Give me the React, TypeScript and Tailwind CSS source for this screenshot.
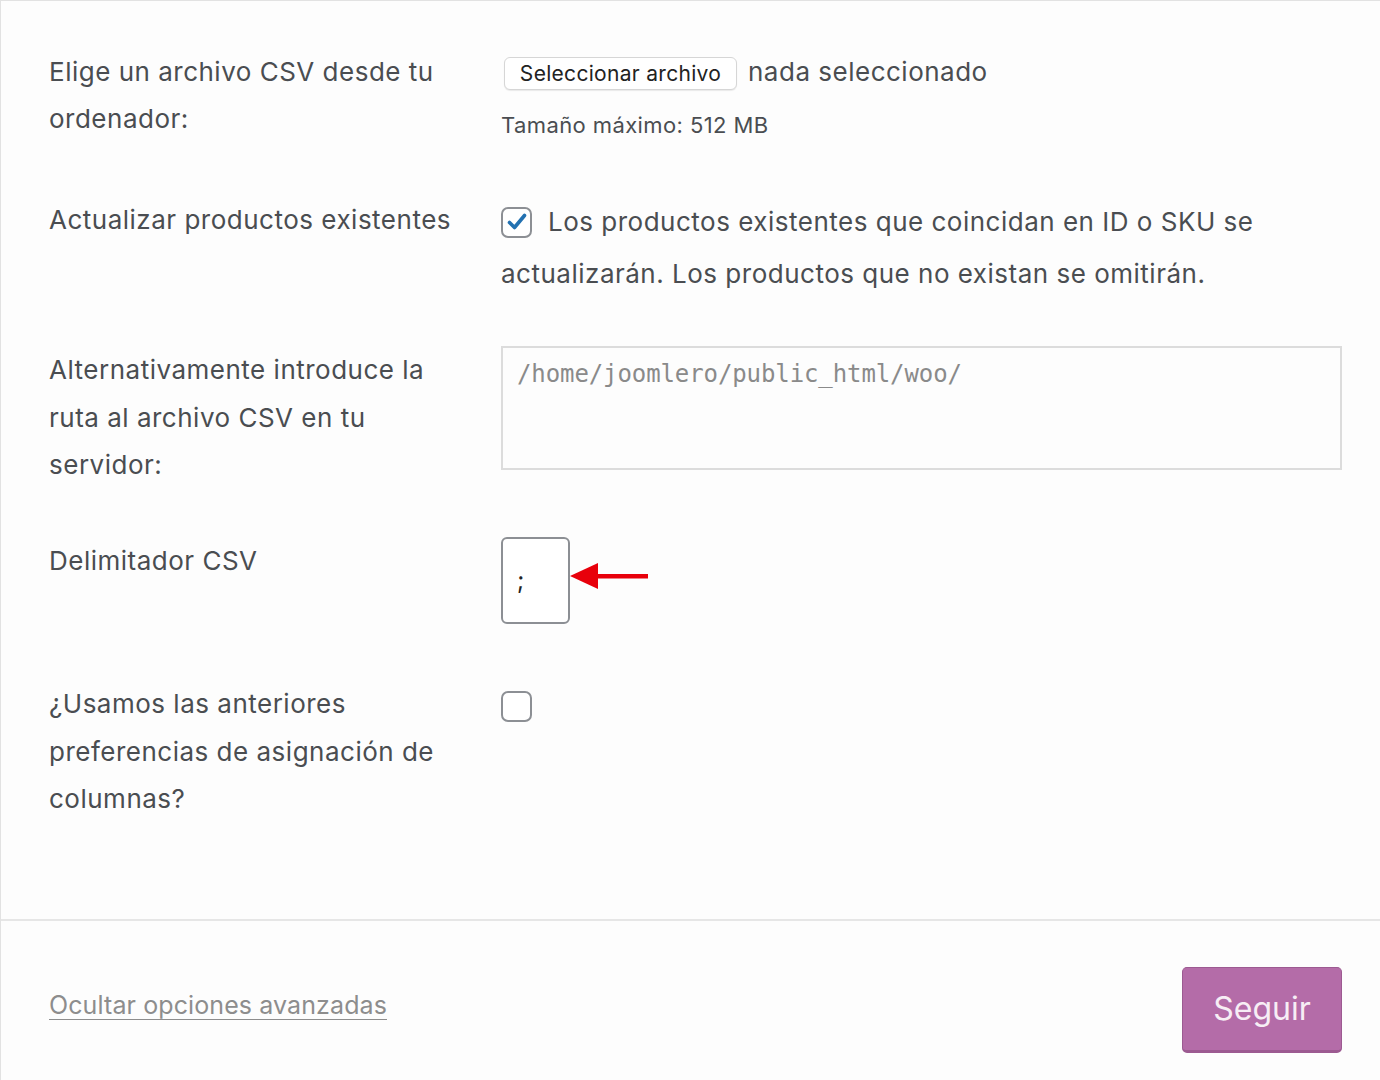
import React from "react";

function CheckBox({ checked }: { checked?: boolean }) {
  return (
    <span className="inline-flex h-[31px] w-[31px] shrink-0 items-center justify-center rounded-[7px] border-2 border-[#8c8f94] bg-white align-middle">
      {checked && (
        <svg width="24" height="24" viewBox="0 0 24 24">
          <path d="M4.5 12.5 L9.5 17.5 L19.5 5.5" fill="none" stroke="#2271b1" strokeWidth="3.6" strokeLinecap="round" strokeLinejoin="round" />
        </svg>
      )}
    </span>
  );
}

export default function App() {
  return (
    <div
      className="h-[1080px] w-[1380px] overflow-hidden border-l border-t border-[#e2e2e2] bg-[#fdfdfd] tracking-[0.5px] text-[#4a4d51]"
      style={{ fontFamily: "Inter, 'Liberation Sans', sans-serif" }}
    >
      <div className="flex h-[918px] flex-col pl-[48px] pr-[38px] pt-[47px]">
        {/* Row 1 */}
        <div className="flex h-[148px]">
          <div className="w-[452px] text-[26px] leading-[47px]">
            Elige un archivo CSV desde tu
            <br />
            ordenador:
          </div>
          <div className="flex flex-col">
            <div className="flex h-[47px] items-center">
              <span className="ml-[3px] mt-[4px] flex h-[33px] w-[233px] items-center justify-center rounded-[6px] border border-[#d6d6d6] bg-white text-[21px] tracking-[0.3px] text-[#222] shadow-[0_1px_1px_rgba(0,0,0,0.08)]">
                Seleccionar archivo
              </span>
              <span className="ml-[11px] text-[26px] text-[#4a4d51]">nada seleccionado</span>
            </div>
            <div className="mt-[14px] text-[22px] leading-[32px] tracking-[0.4px]">Tamaño máximo: 512 MB</div>
          </div>
        </div>
        {/* Row 2 */}
        <div className="flex h-[150px]">
          <div className="w-[452px] whitespace-nowrap text-[26px] leading-[47px]">Actualizar productos existentes</div>
          <div className="text-[26px] leading-[52px]">
            <div className="flex items-center">
              <CheckBox checked />
              <span className="ml-[16px] whitespace-nowrap">Los productos existentes que coincidan en ID o SKU se</span>
            </div>
            <div className="whitespace-nowrap">actualizarán. Los productos que no existan se omitirán.</div>
          </div>
        </div>
        {/* Row 3 */}
        <div className="flex h-[191px]">
          <div className="w-[452px] text-[26px] leading-[47.5px]">
            Alternativamente introduce la
            <br />
            ruta al archivo CSV en tu
            <br />
            servidor:
          </div>
          <div className="flex-1">
            <div
              className="h-[124px] w-full border-2 border-[#dcdcdc] bg-[#fdfdfd] px-[14px] pt-[11px] text-[24px] leading-[30px] tracking-[-0.1px] text-[#8a8a8a]"
              style={{ fontFamily: "'DejaVu Sans Mono', monospace" }}
            >
              /home/joomlero/public_html/woo/
            </div>
          </div>
        </div>
        {/* Row 4 */}
        <div className="flex h-[143px]">
          <div className="w-[452px] text-[26px] leading-[47px]">Delimitador CSV</div>
          <div className="flex items-start">
            <div className="flex h-[87px] w-[69px] items-center rounded-[6px] border-2 border-[#8c8f94] bg-white pl-[14px] text-[24px] text-[#222]">
              ;
            </div>
            <svg width="80" height="30" viewBox="0 0 80 30" className="mt-[25px]">
              <polygon points="0,14 28,1 28,27" fill="#e8000b" />
              <rect x="26" y="12" width="52" height="4.5" fill="#e8000b" />
            </svg>
          </div>
        </div>
        {/* Row 5 */}
        <div className="flex">
          <div className="w-[452px] text-[26px] leading-[47.5px]">
            ¿Usamos las anteriores
            <br />
            preferencias de asignación de
            <br />
            columnas?
          </div>
          <div className="pt-[11px]">
            <CheckBox />
          </div>
        </div>
      </div>
      <div className="border-t-2 border-[#e6e6e6]" />
      <div className="flex items-center justify-between pl-[48px] pr-[38px] pt-[46px]">
        <a className="mb-[9px] text-[25px] tracking-[0.1px] text-[#8d8d8d] underline decoration-1 underline-offset-[5px]">
          Ocultar opciones avanzadas
        </a>
        <button className="flex h-[86px] w-[160px] items-center justify-center rounded-[5px] border border-[#9c5a91] border-b-[3px] bg-[#b46ca8] text-[32px] tracking-normal text-[#f7eef5]">
          Seguir
        </button>
      </div>
    </div>
  );
}
